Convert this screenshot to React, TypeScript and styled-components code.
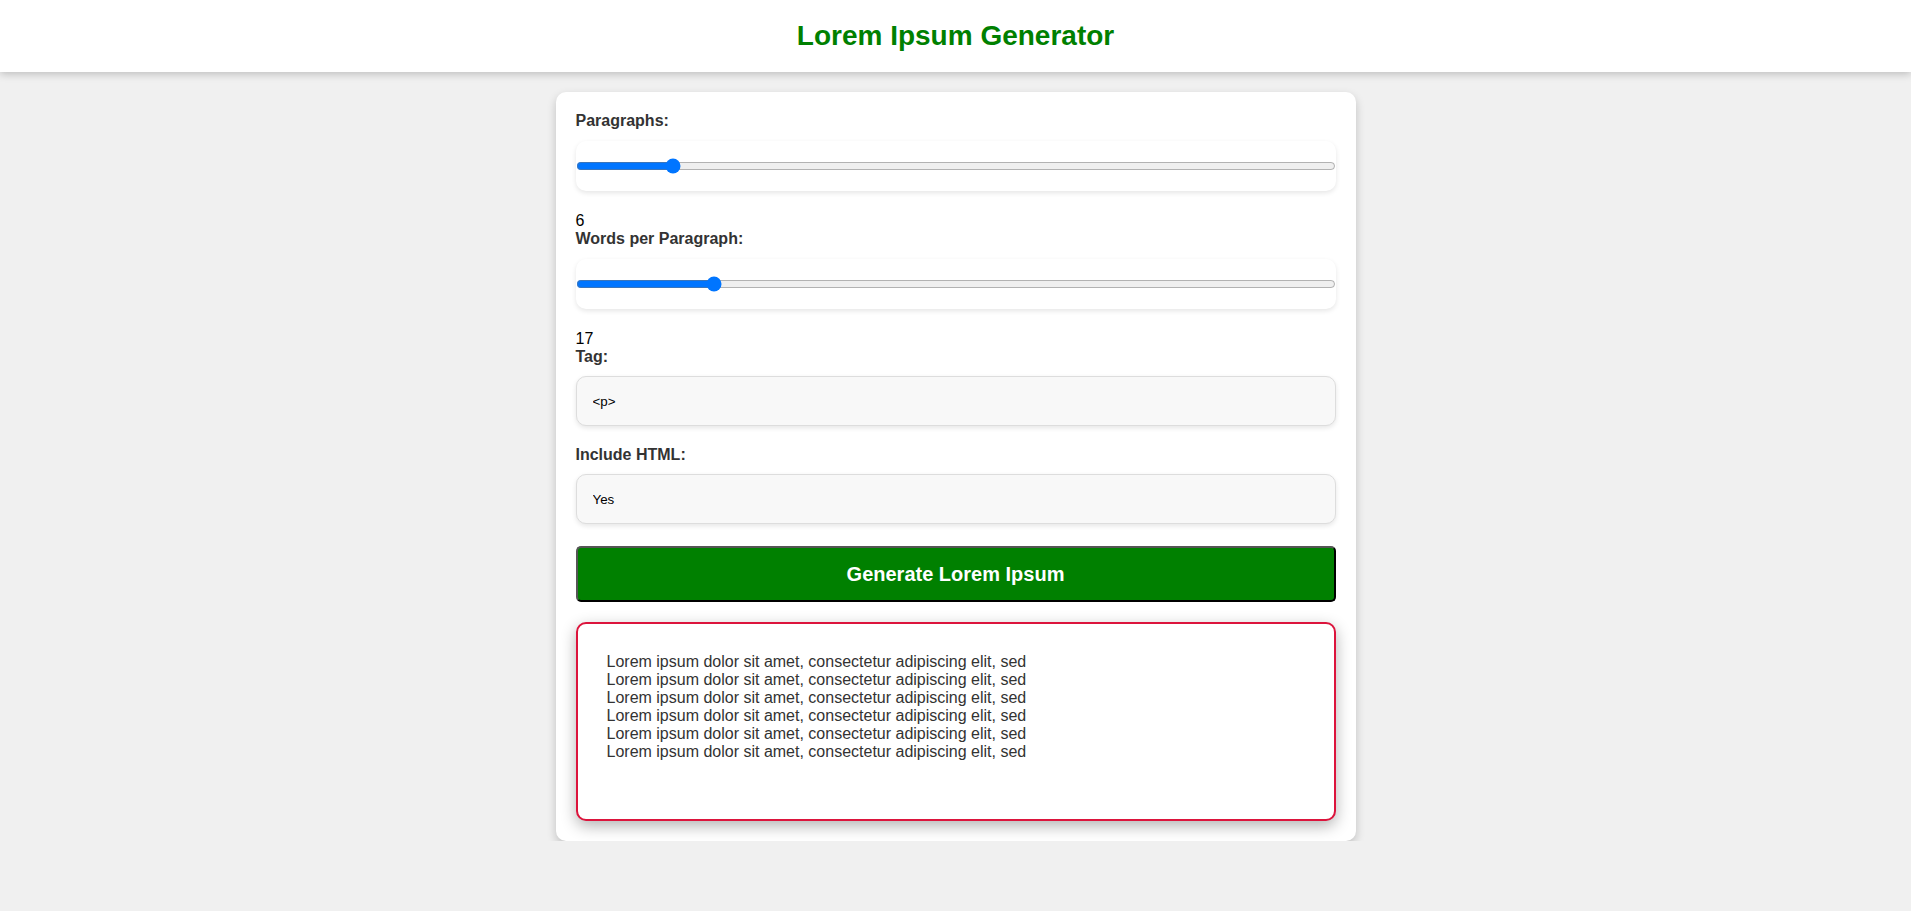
import React, { useState } from "react";
import styled, { createGlobalStyle } from "styled-components";

const GlobalStyle = createGlobalStyle`
  html, body {
    margin: 0;
    padding: 0;
    background: #f0f0f0;
    font-family: "Liberation Sans", Arial, sans-serif;
  }
  * { box-sizing: border-box; }
`;

const Header = styled.header`
  height: 72px;
  background: #ffffff;
  box-shadow: 0 2px 8px rgba(0, 0, 0, 0.22);
  display: flex;
  align-items: center;
  justify-content: center;
`;

const Title = styled.h1`
  margin: 0;
  font-size: 28px;
  font-weight: 700;
  color: #008000;
`;

const Main = styled.main`
  display: flex;
  justify-content: center;
  padding-top: 20px;
`;

const Card = styled.div`
  width: 800px;
  background: #ffffff;
  border-radius: 10px;
  box-shadow: 0 4px 10px rgba(0, 0, 0, 0.2);
  padding: 20px 20px 20px;
  display: flex;
  flex-direction: column;
`;

const Label = styled.label<{ $gap?: number }>`
  display: block;
  font-size: 16px;
  line-height: 18px;
  font-weight: 700;
  color: #333333;
  margin-bottom: ${(p) => (p.$gap ?? 11)}px;
`;

const SliderBox = styled.div`
  height: 50px;
  background: #ffffff;
  border-radius: 10px;
  box-shadow: 0 2px 5px rgba(0, 0, 0, 0.1);
  display: flex;
  align-items: center;
  margin-bottom: 21px;
`;

const Range = styled.input`
  width: 100%;
  margin: 0;
`;

const Value = styled.div`
  font-size: 16px;
  line-height: 18px;
  color: #000000;
`;

const Select = styled.select`
  appearance: none;
  -webkit-appearance: none;
  width: 100%;
  height: 50px;
  padding: 0 16px;
  background: #f8f8f8;
  border: 1px solid #dddddd;
  border-radius: 10px;
  box-shadow: 0 2px 5px rgba(0, 0, 0, 0.1);
  font-family: "Liberation Sans", Arial, sans-serif;
  font-size: 13.333px;
  color: #000000;
  margin-bottom: 20px;
  outline: none;
`;

const GenerateButton = styled.button`
  height: 56px;
  margin-top: 2px;
  background: #008000;
  color: #ffffff;
  font-family: "Liberation Sans", Arial, sans-serif;
  font-size: 20px;
  font-weight: 700;
  border-style: solid;
  border-width: 2px;
  border-color: #555555 #000000 #000000 #555555;
  border-radius: 5px;
  cursor: pointer;
  margin-bottom: 20px;
`;

const Output = styled.div`
  min-height: 199px;
  border: 2px solid #dc143c;
  border-radius: 10px;
  background: #ffffff;
  box-shadow: 0 5px 15px rgba(0, 0, 0, 0.3);
  padding: 29px;
  color: #333333;
  font-size: 16px;
  line-height: 18px;
`;

const OutputLine = styled.p`
  margin: 0;
`;

export default function App() {
  const [paragraphs, setParagraphs] = useState(6);
  const [words, setWords] = useState(17);
  const [tag, setTag] = useState("p");
  const [html, setHtml] = useState("yes");

  const lines = Array.from({ length: paragraphs }, () =>
    "Lorem ipsum dolor sit amet, consectetur adipiscing elit, sed"
  );

  return (
    <>
      <GlobalStyle />
      <Header>
        <Title>Lorem Ipsum Generator</Title>
      </Header>
      <Main>
        <Card>
          <Label>Paragraphs:</Label>
          <SliderBox>
            <Range
              type="range"
              min={0}
              max={50}
              value={paragraphs}
              onChange={(e) => setParagraphs(Number(e.target.value))}
            />
          </SliderBox>
          <Value>{paragraphs}</Value>
          <Label>Words per Paragraph:</Label>
          <SliderBox>
            <Range
              type="range"
              min={1}
              max={92}
              value={words}
              onChange={(e) => setWords(Number(e.target.value))}
            />
          </SliderBox>
          <Value>{words}</Value>
          <Label $gap={10}>Tag:</Label>
          <Select value={tag} onChange={(e) => setTag(e.target.value)}>
            <option value="p">&lt;p&gt;</option>
            <option value="h1">&lt;h1&gt;</option>
            <option value="span">&lt;span&gt;</option>
          </Select>
          <Label $gap={10}>Include HTML:</Label>
          <Select value={html} onChange={(e) => setHtml(e.target.value)}>
            <option value="yes">Yes</option>
            <option value="no">No</option>
          </Select>
          <GenerateButton>Generate Lorem Ipsum</GenerateButton>
          <Output>
            {lines.map((l, i) => (
              <OutputLine key={i}>{l}</OutputLine>
            ))}
          </Output>
        </Card>
      </Main>
    </>
  );
}
